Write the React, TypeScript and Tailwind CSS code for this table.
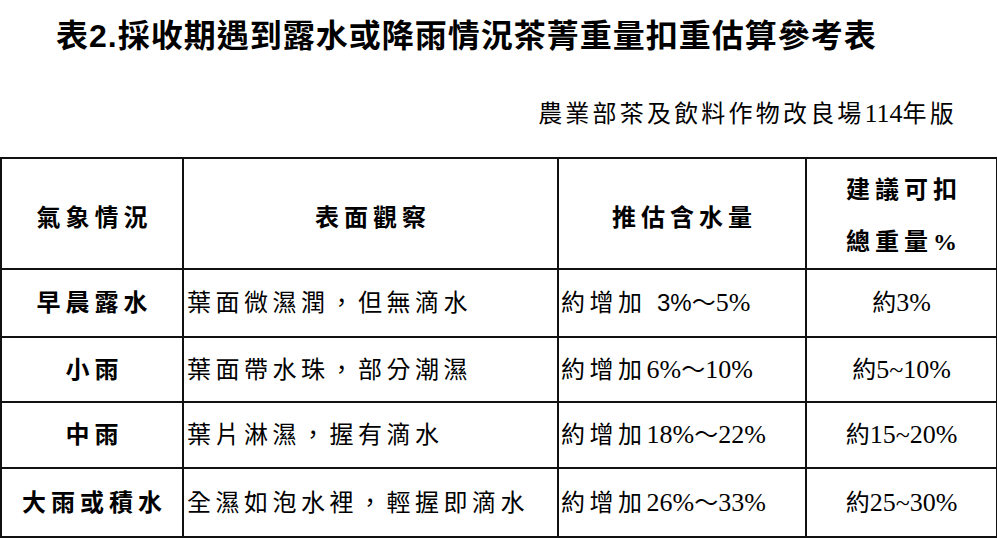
import React from "react";

const serif = { fontFamily: '"Liberation Serif", "Noto Sans CJK TC", serif' };

type Row = { a: string; b: string; c: React.ReactNode; d: React.ReactNode; h: string };

const N = ({ children, sans }: { children: React.ReactNode; sans?: boolean }) => (
  <span
    className="tracking-normal text-[26px] leading-none"
    style={sans ? { fontFamily: '"Liberation Sans", "Noto Sans CJK TC", sans-serif', fontSize: "24px" } : undefined}
  >
    {children}
  </span>
);

const rows: Row[] = [
  {
    a: "早晨露水",
    b: "葉面微濕潤，但無滴水",
    c: (
      <>
        約增加 <N sans>3%</N>
        <span className="tracking-normal">～</span>
        <N>5%</N>
      </>
    ),
    d: <>約<N>3%</N></>,
    h: "h-[68px]",
  },
  {
    a: "小雨",
    b: "葉面帶水珠，部分潮濕",
    c: <>約增加<N>6%</N><span className="tracking-normal">～</span><N>10%</N></>,
    d: <>約<N>5~10%</N></>,
    h: "h-[65px]",
  },
  {
    a: "中雨",
    b: "葉片淋濕，握有滴水",
    c: <>約增加<N>18%</N><span className="tracking-normal">～</span><N>22%</N></>,
    d: <>約<N>15~20%</N></>,
    h: "h-[66px]",
  },
  {
    a: "大雨或積水",
    b: "全濕如泡水裡，輕握即滴水",
    c: <>約增加<N>26%</N><span className="tracking-normal">～</span><N>33%</N></>,
    d: <>約<N>25~30%</N></>,
    h: "h-[69px]",
  },
];

const cell = "border-2 border-[#111] align-middle leading-[30px] p-0";

export default function App() {
  return (
    <div className="w-[997px] h-[540px] overflow-hidden bg-white text-black" style={serif}>
      <div
        className="pt-[15px] pl-[56px] h-[56px] text-[32px] leading-[42px] font-bold tracking-[1px] whitespace-nowrap"
        style={{ fontFamily: '"Liberation Sans", "Noto Sans CJK TC", sans-serif' }}
      >
        表2.採收期遇到露水或降雨情況茶菁重量扣重估算參考表
      </div>
      <div className="mt-[43px] h-[30px] text-right pr-[40px] text-[24px] leading-[30px] tracking-[3.2px] whitespace-nowrap">
        農業部茶及飲料作物改良場<span className="tracking-normal text-[26px] leading-none">114</span>年版
      </div>
      <table className="mt-[28px] w-[996px] table-fixed border-collapse text-[24px]">
        <colgroup>
          <col className="w-[182px]" />
          <col className="w-[375px]" />
          <col className="w-[248px]" />
          <col className="w-[191px]" />
        </colgroup>
        <tbody>
          <tr className="h-[111px] font-bold">
            <td className={`${cell} text-center tracking-[5px] pl-[5px] pt-[8px]`}>氣象情況</td>
            <td className={`${cell} text-center tracking-[5px] pl-[5px] pt-[8px]`}>表面觀察</td>
            <td className={`${cell} text-center tracking-[5px] pl-[5px] pt-[8px]`}>推估含水量</td>
            <td className="border-2 border-[#111] align-middle p-0 text-center tracking-[5px] pl-[5px] pt-[4px] leading-[52px]">
              建議可扣
              <br />
              總重量%
            </td>
          </tr>
          {rows.map((r) => (
            <tr key={r.a} className={r.h}>
              <td className={`${cell} text-center font-bold tracking-[5px] pl-[5px] whitespace-nowrap`}>{r.a}</td>
              <td className={`${cell} text-left pl-[3px] tracking-[4.5px] whitespace-nowrap`}>{r.b}</td>
              <td className={`${cell} text-left pl-[2px] tracking-[4.5px] whitespace-nowrap`}>{r.c}</td>
              <td className={`${cell} text-center whitespace-nowrap`}>{r.d}</td>
            </tr>
          ))}
        </tbody>
      </table>
    </div>
  );
}
